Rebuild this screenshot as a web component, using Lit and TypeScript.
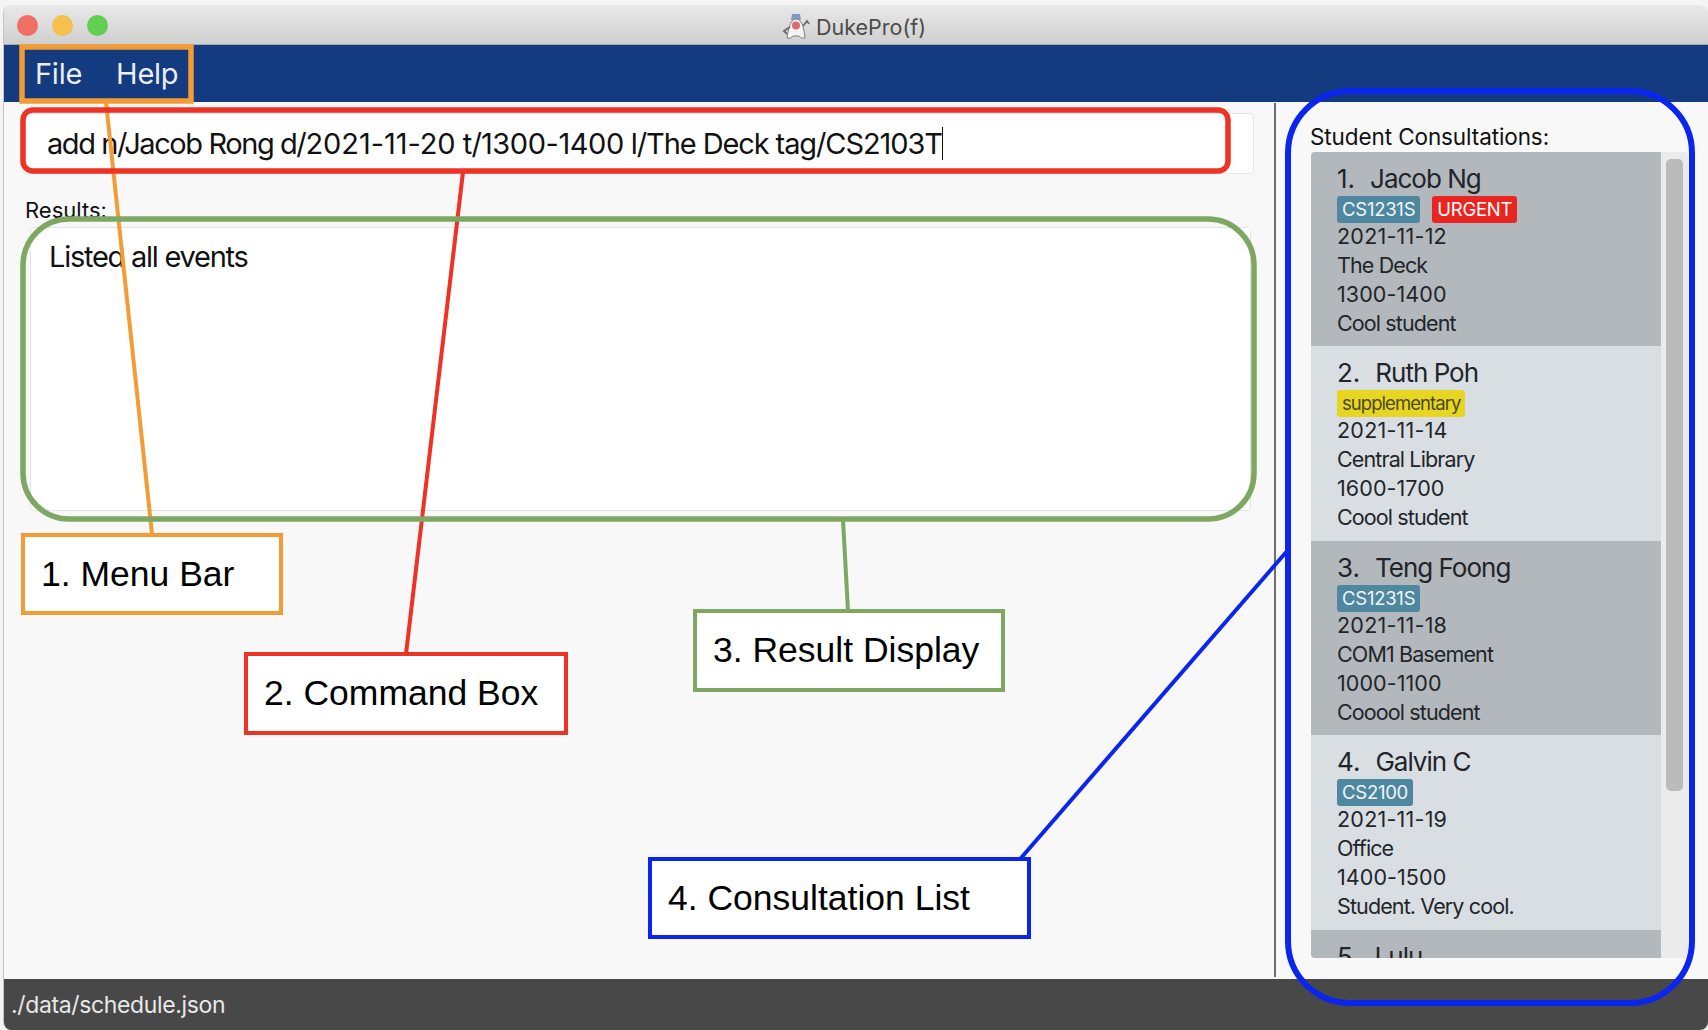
import { LitElement, html, css, svg } from "lit";
import { customElement } from "lit/decorators.js";

interface Tag { text: string; kind: "blue" | "red" | "yellow"; }
interface Consult { name: string; tags: Tag[]; date: string; place: string; time: string; note: string; }

const DATA: Consult[] = [
  { name: "Jacob Ng", tags: [{ text: "CS1231S", kind: "blue" }, { text: "URGENT", kind: "red" }], date: "2021-11-12", place: "The Deck", time: "1300-1400", note: "Cool student" },
  { name: "Ruth Poh", tags: [{ text: "supplementary", kind: "yellow" }], date: "2021-11-14", place: "Central Library", time: "1600-1700", note: "Coool student" },
  { name: "Teng Foong", tags: [{ text: "CS1231S", kind: "blue" }], date: "2021-11-18", place: "COM1 Basement", time: "1000-1100", note: "Cooool student" },
  { name: "Galvin C", tags: [{ text: "CS2100", kind: "blue" }], date: "2021-11-19", place: "Office", time: "1400-1500", note: "Student. Very cool." },
  { name: "Lulu", tags: [], date: "", place: "", time: "", note: "" },
];

const LABELS = [
  { text: "1. Menu Bar", cls: "l1", x: 21, y: 533, w: 262, h: 82 },
  { text: "2. Command Box", cls: "l2", x: 244, y: 652, w: 324, h: 83 },
  { text: "3. Result Display", cls: "l3", x: 693, y: 609, w: 312, h: 83 },
  { text: "4. Consultation List", cls: "l4", x: 648, y: 857, w: 383, h: 82 },
];

@customElement("app-root")
export class AppRoot extends LitElement {
  static styles = css`
    :host { display: block; position: relative; width: 1708px; height: 1030px; overflow: hidden; background: #f4f4f4; font-family: Inter, "Noto Sans", sans-serif; color: #111; }
    .win { height: 1030px; padding: 5px 0 0 3px; box-sizing: border-box; display: flex; flex-direction: column; }
    .inner { flex: 1; display: flex; flex-direction: column; background: #f8f8f8; border-left: 1px solid #c4c4c4; border-radius: 8px; overflow: hidden; min-height: 0; }
    .title { height: 40px; flex: none; display: flex; align-items: center; position: relative; justify-content: center; gap: 6px; background: linear-gradient(#e9e9e9, #cfcfcf); border-bottom: 1px solid #aaa; box-sizing: border-box; color: #4b4b4b; font-size: 21.5px; padding: 4px 4px 0 0; }
    .lights { position: absolute; left: 13px; top: 10px; display: flex; gap: 14px; }
    .light { width: 21px; height: 21px; border-radius: 50%; }
    .r { background: #ef6f65; } .y { background: #f5c04f; } .g { background: #62ce52; }
    .menu { height: 57px; flex: none; background: #143b7f; color: #ebedf2; display: flex; align-items: center; gap: 34px; padding-left: 31px; font-size: 29px; letter-spacing: -0.25px; }
    .main { flex: 1; display: flex; min-height: 0; }
    .left { width: 1272px; flex: none; box-sizing: border-box; border-right: 2px solid #6e6e6e; margin: 1px 0 2px; padding: 10px 20px 0 18px; display: flex; flex-direction: column; }
    .cmd { height: 61px; flex: none; background: #fff; border: 1px solid #e6e6e6; border-radius: 4px; display: flex; align-items: center; padding-left: 24px; font-size: 29px; letter-spacing: -0.92px; white-space: pre; box-sizing: border-box; }
    .tight { letter-spacing: -1.42px; }
    .wide { letter-spacing: -0.05px; }
    .mid { letter-spacing: -0.44px; }
    .rest { letter-spacing: -1.1px; }
    .caret { display: inline-block; width: 1.5px; height: 33px; background: #111; }
    .res-label { font-size: 22px; letter-spacing: 0; margin: 24px 0 0 3px; height: 29px; line-height: 24px; }
    .res { height: 284px; flex: none; margin: 0 3px 0 8px; box-sizing: border-box; background: #fff; border: 1px solid #e4e4e4; border-radius: 4px; padding: 14px 18px; font-size: 29px; letter-spacing: -1.25px; line-height: 29px; }
    .side { flex: 1; min-width: 0; padding: 34px 20px 21px 35px; display: flex; flex-direction: column; }
    .side-title { font-size: 22.5px; letter-spacing: -0.1px; height: 16px; line-height: 1px; white-space: nowrap; margin-left: -1px; }
    .list { flex: 1; min-height: 0; display: flex; overflow: hidden; background: #ebebeb; border-radius: 4px 4px 0 4px; }
    .rows { width: 350px; flex: none; overflow: hidden; }
    .row { height: 194.4px; box-sizing: border-box; padding: 14px 0 0 26px; color: #212529; font-size: 21.5px; line-height: 29px; letter-spacing: -0.88px; }
    .row:nth-child(odd) { background: #b3b8bc; }
    .row:nth-child(even) { background: #d9dee3; }
    .name { font-size: 26px; height: 28px; line-height: 26px; letter-spacing: -1px; display: flex; }
    .num { margin-right: 15px; letter-spacing: 0; }
    .tags { display: flex; gap: 12px; height: 27px; margin: 2px 0 -1px; }
    .tag { height: 27px; line-height: 27px; border-radius: 3px; padding: 0 5px; font-size: 18.5px; letter-spacing: -0.25px; }
    .blue { background: #4e87a0; color: #f2f6f8; }
    .red { background: #e8251f; color: #fff; }
    .yellow { background: #e8d521; color: #4c4a1c; letter-spacing: -0.95px; }
    .date { letter-spacing: 0.23px; }
    .time { letter-spacing: 0.08px; }
    .track { flex: 1; padding: 7px 5px 0 5px; }
    .thumb { height: 632px; background: #bbb; border-radius: 5px; }
    .status { height: 51px; flex: none; background: #484848; color: #e8e8e8; display: flex; align-items: center; padding-left: 7px; font-size: 23px; letter-spacing: -0.36px; }
    .overlay { position: absolute; inset: 0; pointer-events: none; }
    .label { position: absolute; box-sizing: border-box; background: #fff; border: 4px solid; display: flex; align-items: center; padding-left: 16px; font-family: "Liberation Sans", Arial, sans-serif; font-size: 35.5px; color: #000; white-space: nowrap; }
    .l1 { border-color: #f39c35; }
    .l2 { border-color: #ee3224; }
    .l3 { border-color: #7ea862; }
    .l4 { border-color: #0a25ee; }
  `;

  private duke() {
    return html`<svg width="28" height="28" viewBox="0 0 28 28">
      <path d="M10 1 h8 l1 6 h-10z" fill="#7f9cc0"/>
      <path d="M14 6 c5 0 7 7 8 12 l1 7 c-3 1 -5 -1 -6 -2 l-6 0 c-1 1 -3 3 -6 2 c1 -7 3 -19 9 -19z" fill="#f4f4f4" stroke="#808080" stroke-width="1"/>
      <circle cx="14" cy="12.5" r="4" fill="#dc6a6e"/>
      <path d="M8 14 l-6 4 l3 3 M21 13 l4 -5 l2 3" fill="none" stroke="#6a6a6a" stroke-width="1.8"/>
    </svg>`;
  }

  private row(c: Consult, i: number) {
    return html`<div class="row">
      <div class="name"><span class="num">${i + 1}.</span><span>${c.name}</span></div>
      <div class="tags">${c.tags.map((t) => html`<span class="tag ${t.kind}">${t.text}</span>`)}</div>
      <div class="date">${c.date}</div><div>${c.place}</div><div class="time">${c.time}</div><div>${c.note}</div>
    </div>`;
  }

  render() {
    return html`
      <div class="win"><div class="inner">
        <div class="title">
          <div class="lights"><span class="light r"></span><span class="light y"></span><span class="light g"></span></div>
          ${this.duke()}<span>DukePro(f)</span>
        </div>
        <div class="menu"><span>File</span><span>Help</span></div>
        <div class="main">
          <div class="left">
            <div class="cmd"><span><span class="tight">add n/Jacob Rong d/</span><span class="wide">2021-11-20</span> t/<span class="mid">1300-1400</span><span class="rest"> l/The Deck tag/CS2103T</span></span><span class="caret"></span></div>
            <div class="res-label">Results:</div>
            <div class="res">Listed all events</div>
          </div>
          <div class="side">
            <div class="side-title">Student Consultations:</div>
            <div class="list">
              <div class="rows">${DATA.map((c, i) => this.row(c, i))}</div>
              <div class="track"><div class="thumb"></div></div>
            </div>
          </div>
        </div>
        <div class="status">./data/schedule.json</div>
      </div></div>
      <svg class="overlay" width="1708" height="1030" viewBox="0 0 1708 1030" fill="none" stroke-width="5.5">
        ${svg`
          <line x1="106" y1="102" x2="152" y2="534" stroke="#f39c35" stroke-width="4"/>
          <line x1="463" y1="172" x2="406" y2="654" stroke="#ee3224" stroke-width="4"/>
          <line x1="843" y1="520" x2="848" y2="611" stroke="#7ea862" stroke-width="4"/>
          <line x1="1288" y1="550" x2="1021" y2="858" stroke="#0a25ee" stroke-width="4"/>
          <rect x="22" y="47" width="169" height="54" stroke="#f39c35"/>
          <rect x="23" y="110" width="1205" height="61" rx="10" stroke="#ee3224"/>
          <rect x="23" y="219" width="1231" height="300" rx="46" stroke="#7ea862"/>
          <rect x="1288" y="91" width="404" height="912" rx="62" stroke="#0a25ee" stroke-width="6"/>
        `}
      </svg>
      ${LABELS.map((l) => html`<div class="label ${l.cls}" style="left:${l.x}px;top:${l.y}px;width:${l.w}px;height:${l.h}px">${l.text}</div>`)}
    `;
  }
}
